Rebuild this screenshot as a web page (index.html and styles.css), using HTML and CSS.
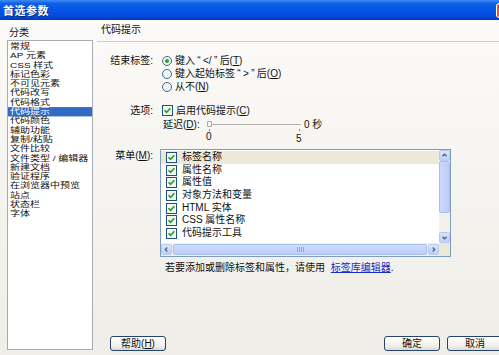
FILE: index.html
```html
<!DOCTYPE html>
<html>
<head>
<meta charset="utf-8">
<link rel="stylesheet" href="styles.css">
</head>
<body>
<div class="win">
  <div class="titlebar">
    <span class="ttl">首选参数</span>
    <span class="close"></span>
  </div>
  <div class="dlg">
    <div class="left">
      <div class="cat">分类</div>
      <div class="catlist">
        <ul class="catinner">
          <li>常规</li>
          <li>AP 元素</li>
          <li>CSS 样式</li>
          <li>标记色彩</li>
          <li>不可见元素</li>
          <li>代码改写</li>
          <li>代码格式</li>
          <li class="sel">代码提示</li>
          <li>代码颜色</li>
          <li>辅助功能</li>
          <li>复制/粘贴</li>
          <li>文件比较</li>
          <li>文件类型 / 编辑器</li>
          <li>新建文档</li>
          <li>验证程序</li>
          <li>在浏览器中预览</li>
          <li>站点</li>
          <li>状态栏</li>
          <li>字体</li>
        </ul>
      </div>
    </div>
    <div class="panel">
      <div class="ph">代码提示</div>
      <div class="row r-end">
        <div class="lbl">结束标签:</div>
        <div class="ctl">
          <div class="opt"><span class="radio on"></span>键入 <span class="q">“</span>&lt;/<span class="q">”</span> 后(<u>T</u>)</div>
          <div class="opt"><span class="radio"></span>键入起始标签 <span class="q">“</span>&gt;<span class="q">”</span> 后(<u>O</u>)</div>
          <div class="opt"><span class="radio"></span>从不(<u>N</u>)</div>
        </div>
      </div>
      <div class="row r-opt">
        <div class="lbl">选项:</div>
        <div class="ctl">
          <div class="opt"><svg class="cb" viewBox="0 0 11 11"><rect x="0.5" y="0.5" width="10" height="10" fill="#f6f6f2" stroke="#1c5180"/><path d="M2.5 5.2 L4.6 7.4 L8.4 3.2" fill="none" stroke="#21a121" stroke-width="1.6"/></svg>启用代码提示(<u>C</u>)</div>
        </div>
      </div>
      <div class="row r-delay">
        <div class="delay">延迟(<u>D</u>):</div>
        <div class="slider"><span class="thumb"></span><span class="track"></span><span class="tick t0"></span><span class="tick t5"></span></div>
        <div class="sec">0 秒</div>
      </div>
      <div class="ticks"><span class="n0">0</span><span class="n5">5</span></div>
      <div class="row r-menu">
        <div class="lbl">菜单(<u>M</u>):</div>
        <div class="menubox">
          <div class="items">
            <div class="it first"><svg class="cb" viewBox="0 0 11 11"><rect x="0.5" y="0.5" width="10" height="10" fill="#f6f6f2" stroke="#1c5180"/><path d="M2.5 5.2 L4.6 7.4 L8.4 3.2" fill="none" stroke="#21a121" stroke-width="1.6"/></svg>标签名称</div>
            <div class="it"><svg class="cb" viewBox="0 0 11 11"><rect x="0.5" y="0.5" width="10" height="10" fill="#f6f6f2" stroke="#1c5180"/><path d="M2.5 5.2 L4.6 7.4 L8.4 3.2" fill="none" stroke="#21a121" stroke-width="1.6"/></svg>属性名称</div>
            <div class="it"><svg class="cb" viewBox="0 0 11 11"><rect x="0.5" y="0.5" width="10" height="10" fill="#f6f6f2" stroke="#1c5180"/><path d="M2.5 5.2 L4.6 7.4 L8.4 3.2" fill="none" stroke="#21a121" stroke-width="1.6"/></svg>属性值</div>
            <div class="it"><svg class="cb" viewBox="0 0 11 11"><rect x="0.5" y="0.5" width="10" height="10" fill="#f6f6f2" stroke="#1c5180"/><path d="M2.5 5.2 L4.6 7.4 L8.4 3.2" fill="none" stroke="#21a121" stroke-width="1.6"/></svg>对象方法和变量</div>
            <div class="it"><svg class="cb" viewBox="0 0 11 11"><rect x="0.5" y="0.5" width="10" height="10" fill="#f6f6f2" stroke="#1c5180"/><path d="M2.5 5.2 L4.6 7.4 L8.4 3.2" fill="none" stroke="#21a121" stroke-width="1.6"/></svg>HTML 实体</div>
            <div class="it"><svg class="cb" viewBox="0 0 11 11"><rect x="0.5" y="0.5" width="10" height="10" fill="#f6f6f2" stroke="#1c5180"/><path d="M2.5 5.2 L4.6 7.4 L8.4 3.2" fill="none" stroke="#21a121" stroke-width="1.6"/></svg>CSS 属性名称</div>
            <div class="it"><svg class="cb" viewBox="0 0 11 11"><rect x="0.5" y="0.5" width="10" height="10" fill="#f6f6f2" stroke="#1c5180"/><path d="M2.5 5.2 L4.6 7.4 L8.4 3.2" fill="none" stroke="#21a121" stroke-width="1.6"/></svg>代码提示工具</div>
          </div>
          <div class="vsb">
            <span class="sbtn"><svg viewBox="0 0 11 11"><path d="M3 6.5 L5.5 4 L8 6.5" fill="none" stroke="#4d6185" stroke-width="1.6"/></svg></span>
            <span class="vthumb"></span>
            <span class="vtrack"></span>
            <span class="sbtn"><svg viewBox="0 0 11 11"><path d="M3 4.5 L5.5 7 L8 4.5" fill="none" stroke="#4d6185" stroke-width="1.6"/></svg></span>
          </div>
          <div class="hsb">
            <span class="sbtn"><svg viewBox="0 0 11 11"><path d="M6.5 3 L4 5.5 L6.5 8" fill="none" stroke="#4d6185" stroke-width="1.6"/></svg></span>
            <span class="hthumb"><span class="grip"></span></span>
            <span class="sbtn"><svg viewBox="0 0 11 11"><path d="M4.5 3 L7 5.5 L4.5 8" fill="none" stroke="#4d6185" stroke-width="1.6"/></svg></span>
          </div>
          <div class="corner"></div>
        </div>
      </div>
      <div class="note">若要添加或删除标签和属性，请使用 <a class="lnk">标签库编辑器</a>.</div>
      <div class="btns">
        <button class="btn help">帮助(<u>H</u>)</button>
        <button class="btn ok">确定</button>
        <button class="btn cancel">取消</button>
      </div>
    </div>
  </div>
</div>
</body>
</html>
```
FILE: styles.css
```css
* { box-sizing: border-box; }
html, body { margin: 0; padding: 0; }
body {
  width: 499px; height: 355px; overflow: hidden;
  font-family: "Liberation Sans", "Noto Sans CJK SC", sans-serif;
  font-size: 10px; color: #111;
  background: linear-gradient(#fcfbf9, #efede7);
}
.win { width: 499px; height: 355px; display: flex; flex-direction: column; overflow: hidden; }
.titlebar {
  height: 20px; flex-shrink: 0; display: flex; align-items: center;
  background: linear-gradient(#3e8df4 0, #0d5fe9 18%, #0553e5 55%, #0348d8 85%, #0238b6 100%);
  padding-left: 3px;
}
.ttl { color: #fff; font-weight: bold; font-size: 11px; letter-spacing: 0.5px; text-shadow: 1px 1px 0 #0a2a80; }
.close {
  margin-left: auto; margin-right: -18px; width: 21px; height: 15px;
  border: 1px solid #fff; border-radius: 3px; background: #e0582e;
}
.dlg { flex: 1; display: flex; min-height: 0; }
.left { width: 97px; flex-shrink: 0; padding: 7px 0 5px 7px; display: flex; flex-direction: column; }
.cat { height: 13px; line-height: 12px; padding-left: 2px; font-size: 10px; }
.catlist {
  padding: 1px 0 0 0; width: 86px; flex: 1; background: #fff; border: 1px solid #a5acb5; overflow: hidden;
}
.catinner {
  list-style: none; margin: 0; padding: 0;
  transform: scaleY(0.775); transform-origin: 0 0;
}
.catinner li { height: 12px; line-height: 12px; padding-left: 2px; font-size: 10px; white-space: nowrap; }
.catinner li.sel { background: #316ac5; color: #fff; }
.panel { flex: 1; display: flex; flex-direction: column; min-width: 0; padding-bottom: 4px; }
.ph {
  height: 22px; line-height: 20px; padding-left: 4px; flex-shrink: 0;
  border-bottom: 1px solid #cfcdc5; font-size: 10px;
}
.row { display: flex; }
.lbl { width: 56px; flex-shrink: 0; text-align: right; line-height: 13px; }
.ctl { margin-left: 8px; }
.opt { height: 13px; line-height: 13px; display: flex; align-items: center; white-space: nowrap; }
.q { display: inline-block; width: 8px; text-align: center; }
.r-end { margin-top: 12px; }
.radio {
  width: 10px; height: 10px; border-radius: 50%; border: 1px solid #3b6a96;
  background: #f4f4f0; margin: 0 3px 0 1px; display: inline-flex; align-items: center; justify-content: center;
}
.radio.on::after { content: ""; width: 4px; height: 4px; border-radius: 50%; background: #2aa12a; }
.cb { width: 11px; height: 11px; margin: 0 3px 0 1px; flex-shrink: 0; }
.r-opt { margin-top: 11px; }
.r-delay { margin-top: 1px; height: 13px; align-items: center; padding-left: 66px; }
.delay { width: 44px; line-height: 13px; white-space: nowrap; }
.slider { position: relative; width: 94px; height: 13px; }
.track { position: absolute; left: 2px; right: 0; top: 6px; height: 1px; background: #b2b0a8; }
.thumb { position: absolute; left: 0; top: 3px; width: 5px; height: 6px; border: 1px solid #a8a8a0; border-radius: 1px; background: #f6f5f0; z-index: 1; }
.tick { position: absolute; top: 11px; width: 1px; height: 2px; background: #888; }
.t0 { left: 2px; } .t5 { left: 92px; }
.sec { margin-left: 3px; line-height: 13px; }
.ticks { height: 11px; position: relative; line-height: 11px; }
.ticks span { position: absolute; top: 0; }
.n0 { left: 109px; } .n5 { left: 199px; top: 2px !important; }
.r-menu { margin-top: 7px; }
.menubox {
  margin-left: 7px; width: 291px; height: 108px; border: 1px solid #7f9db9; background: #fff;
  display: grid; grid-template-columns: 1fr 11px; grid-template-rows: 1fr 13px;
}
.items { padding-top: 1px; overflow: hidden; }
.it { height: 12.7px; line-height: 12.7px; display: flex; align-items: center; padding-left: 4px; white-space: nowrap; }
.it .cb { margin-right: 5px; }
.it.first { background: #ece9d8; }
.vsb { display: flex; flex-direction: column; background: #f2f1ec; }
.sbtn {
  width: 11px; height: 11px; flex-shrink: 0; border: 1px solid #b7c9f3; border-radius: 2px;
  background: linear-gradient(#dbe6fd, #bccff9); display: flex;
}
.sbtn svg { width: 9px; height: 9px; }
.vthumb { height: 52px; border: 1px solid #a9bff3; border-radius: 2px; background: linear-gradient(90deg, #cbd9fc, #bccdf8); }
.vtrack { flex: 1; }
.hsb { display: flex; background: #f2f1ec; padding-top: 1px; }
.hsb .sbtn { height: 11px; }
.hthumb {
  flex: 1; margin: 0 1px; height: 11px; border: 1px solid #a9bff3; border-radius: 2px;
  background: linear-gradient(#cfdcfd, #bccdf8); display: flex; align-items: center; justify-content: center;
}
.grip { width: 7px; height: 5px; background: repeating-linear-gradient(90deg, #8ea6e0 0 1px, transparent 1px 2px); }
.corner { background: #ece9d8; }
.note { margin-top: 5px; padding-left: 68px; line-height: 11px; white-space: nowrap; }
.lnk { color: #1a2fc0; text-decoration: underline; margin-left: 3px; }
.btns { margin-top: auto; display: flex; height: 15px; }
.btn {
  font-family: inherit; font-size: 10px; color: #111; padding: 0; height: 15px; width: 56px;
  border: 1px solid #27446f; border-radius: 3px; line-height: 12px;
  background: linear-gradient(#ffffff, #f0efe8 70%, #dcdad0);
}
.help { margin-left: 13px; }
.ok { margin-left: auto; }
.cancel { margin-left: 7px; margin-right: -4px; flex-shrink: 0; }
```
